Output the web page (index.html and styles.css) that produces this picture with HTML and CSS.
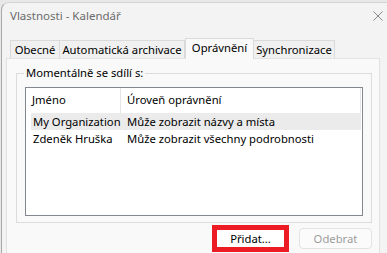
FILE: index.html
```html
<!DOCTYPE html>
<html lang="cs">
<head>
  <meta charset="UTF-8">
  <title>Vlastnosti - Kalendář</title>
  <link rel="stylesheet" href="styles.css">
</head>
<body>
  <div class="window">
    <div class="titlebar">
      <span class="title">Vlastnosti - Kalendář</span>
      <span class="close">
        <svg width="10" height="10" viewBox="0 0 10 10"><path d="M0.5 0.5 L9.5 9.5 M9.5 0.5 L0.5 9.5" stroke="#8a8a8a" stroke-width="1" fill="none"/></svg>
      </span>
    </div>
    <div class="content">
      <div class="tabs">
        <div class="tab tab-general">Obecné</div>
        <div class="tab tab-archive">Automatická archivace</div>
        <div class="tab tab-perm active">Oprávnění</div>
        <div class="tab tab-sync">Synchronizace</div>
      </div>
      <div class="panel">
        <fieldset class="group">
          <legend>Momentálně se sdílí s:</legend>
          <div class="list">
            <div class="list-head">
              <div class="col-name">Jméno</div>
              <div class="col-level">Úroveň oprávnění</div>
            </div>
            <div class="row selected">
              <div class="cell-name">My Organization</div>
              <div class="cell-level">Může zobrazit názvy a místa</div>
            </div>
            <div class="row">
              <div class="cell-name">Zdeněk Hruška</div>
              <div class="cell-level">Může zobrazit všechny podrobnosti</div>
            </div>
          </div>
        </fieldset>
        <div class="buttons">
          <button class="btn btn-add">Přidat...</button>
          <button class="btn btn-remove" disabled>Odebrat</button>
        </div>
      </div>
    </div>
  </div>
</body>
</html>
```
FILE: styles.css
```css
* {
  box-sizing: border-box;
}
html, body {
  margin: 0;
  padding: 0;
}
body {
  width: 387px;
  height: 253px;
  overflow: hidden;
  background: #e8e8e8;
  font-family: "Noto Sans", "Segoe UI", sans-serif;
  font-size: 11.25px;
  color: #000;
}
.window {
  margin: 2px 0 0 1px;
  width: 392px;
  height: 251px;
  overflow: hidden;
  background: #f3f3f3;
  border-left: 1px solid #a9a9a9;
  border-top: 1px solid #d4d4d4;
  border-top-left-radius: 8px;
}
.titlebar {
  height: 24px;
  display: flex;
  align-items: center;
  justify-content: space-between;
  padding: 0 0 0 8px;
}
.title {
  color: #6b6b6b;
  font-size: 11.5px;
}
.close {
  width: 10px;
  height: 10px;
  margin-right: 10px;
  margin-top: 2px;
  display: flex;
}
.content {
  padding: 11px 0 0 4px;
}
.tabs {
  display: flex;
  align-items: flex-end;
  height: 21px;
  margin: 0 0 -1px 4px;
  position: relative;
  z-index: 1;
}
.tab {
  height: 18px;
  margin-bottom: 1px;
  border: 1px solid #dadada;
  border-bottom: none;
  background: #f0f0f0;
  text-align: center;
  line-height: 17px;
  white-space: nowrap;
}
.tab + .tab {
  border-left: none;
}
.tab-general { width: 50px; }
.tab-archive { width: 125px; }
.tab-perm { width: 69px; }
.tab-sync { width: 81px; }
.tab.active {
  height: 21px;
  margin-bottom: 0;
  border-left: 1px solid #dadada;
  background: #f9f9f9;
  line-height: 18px;
  padding-bottom: 2px;
}
.tab.active + .tab {
  border-left: none;
}
.panel {
  width: 374px;
  height: 200px;
  background: #f9f9f9;
  border: 1px solid #e2e2e2;
}
.group {
  margin: 6px 7px 0 9px;
  padding: 6px 8px 6px 8px;
  border: 1px solid #dcdcdc;
  min-width: 0;
}
.group legend {
  padding: 0 2px;
  margin-left: -1px;
  line-height: 16px;
}
.list {
  height: 129px;
  background: #fff;
  border: 1px solid #838790;
}
.list-head {
  display: grid;
  grid-template-columns: 95px 1fr;
  height: 25px;
  margin-right: 1px;
  align-items: stretch;
}
.col-name,
.col-level {
  line-height: 24px;
  border-right: 1px solid #e5e5e5;
}
.col-name {
  padding-left: 6px;
}
.col-level {
  padding-left: 6px;
}
.row {
  display: grid;
  grid-template-columns: 89px 1fr;
  height: 17px;
  line-height: 17px;
  margin: 0 1px 0 5px;
  white-space: nowrap;
}
.row.selected {
  background: #ebebeb;
}
.cell-name {
  padding-left: 2px;
}
.cell-level {
  padding-left: 7px;
}
.buttons {
  display: flex;
  justify-content: flex-end;
  align-items: center;
  gap: 10px;
  margin: 2px 7px 0 0;
}
.btn {
  font-family: inherit;
  font-size: 11.25px;
  padding: 0;
  cursor: pointer;
}
.btn-add {
  width: 77px;
  height: 27px;
  border: 5px solid #ed1c24;
  background: #fff;
  color: #000;
}
.btn-remove {
  width: 73px;
  height: 21px;
  border: 1px solid #e3e3e3;
  border-radius: 4px;
  background: #fbfbfb;
  color: #9d9d9d;
}
```
